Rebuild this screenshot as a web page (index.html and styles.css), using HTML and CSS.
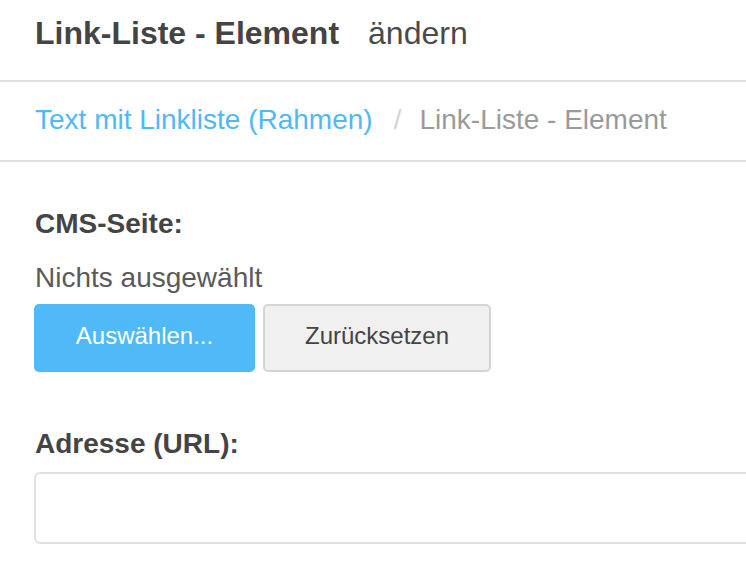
FILE: index.html
```html
<!DOCTYPE html>
<html lang="de">
<head>
<meta charset="utf-8">
<link rel="stylesheet" href="styles.css">
</head>
<body>
<header class="page-header">
  <h1 class="title"><span class="title-main">Link-Liste - Element</span><span class="title-sub">ändern</span></h1>
</header>
<nav class="breadcrumb">
  <a class="crumb-link" href="#">Text mit Linkliste (Rahmen)</a>
  <span class="crumb-sep">/</span>
  <span class="crumb-current">Link-Liste - Element</span>
</nav>
<main class="form">
  <div class="field">
    <div class="label">CMS-Seite:</div>
    <div class="value">Nichts ausgewählt</div>
    <div class="buttons">
      <button class="btn btn-primary">Auswählen...</button>
      <button class="btn btn-default">Zurücksetzen</button>
    </div>
  </div>
  <div class="field field-url">
    <div class="label">Adresse (URL):</div>
    <input class="input" type="text">
  </div>
</main>
</body>
</html>
```
FILE: styles.css
```css
* { box-sizing: border-box; }
html, body { margin: 0; padding: 0; background: #fff; }
body {
  font-family: "Liberation Sans", Arial, Helvetica, sans-serif;
  color: #444;
  overflow: hidden;
  width: 746px;
}
.page-header {
  height: 82px;
  border-bottom: 2px solid #e0e0e0;
  padding: 15px 0 0 35px;
}
.title {
  margin: 0;
  font-size: 32px;
  line-height: 36px;
  font-weight: normal;
  color: #444;
  white-space: nowrap;
}
.title-main { font-weight: bold; margin-right: 29px; }
.title-sub { color: #4a4a4a; }
.breadcrumb {
  height: 80px;
  border-bottom: 2px solid #e0e0e0;
  display: flex;
  align-items: flex-start;
  padding: 22px 0 0 35px;
  font-size: 28px;
  line-height: 32px;
  white-space: nowrap;
}
.crumb-link { color: #4fb8f5; text-decoration: none; }
.crumb-sep { color: #d4d4d4; margin: 0 18px 0 21px; }
.crumb-current { color: #9a9a9a; }
.form { padding: 46px 0 0 35px; }
.label {
  font-size: 28px;
  font-weight: bold;
  color: #444;
  line-height: 32px;
}
.value {
  font-size: 28px;
  color: #5a5a5a;
  margin-top: 22px;
  line-height: 32px;
}
.buttons { display: flex; gap: 8px; margin-top: 10px; margin-left: -1px; }
.btn {
  height: 68px;
  border-radius: 5px;
  font-family: inherit;
  font-size: 24px;
  padding: 0 0 4px 0;
}
.btn-primary {
  width: 221px;
  background: #50b9f7;
  border: none;
  color: #fff;
}
.btn-default {
  width: 228px;
  background: #f0f0f0;
  border: 2px solid #d4d4d4;
  color: #444;
}
.field-url { margin-top: 56px; }
.input {
  display: block;
  margin-top: 12px;
  margin-left: -1px;
  width: 740px;
  height: 72px;
  border: 2px solid #e0e0e0;
  border-radius: 6px;
  background: #fff;
}
```
